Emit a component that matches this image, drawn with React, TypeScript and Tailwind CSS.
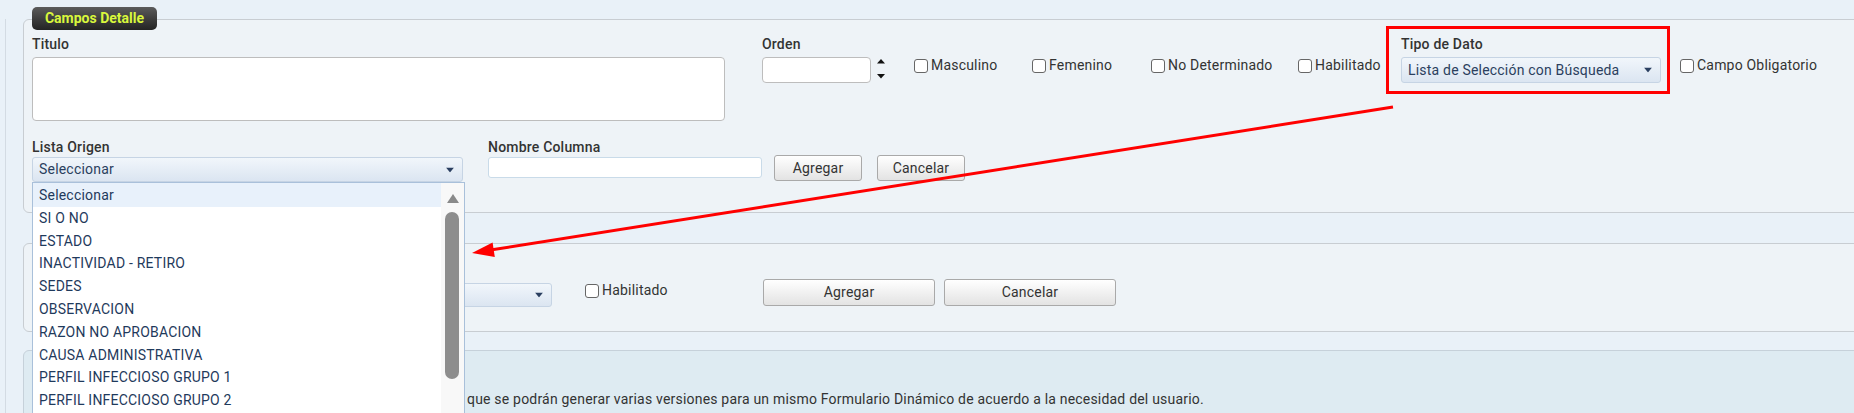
import React from 'react';

const LISTA_ORIGEN = [
  'SI O NO',
  'ESTADO',
  'INACTIVIDAD - RETIRO',
  'SEDES',
  'OBSERVACION',
  'RAZON NO APROBACION',
  'CAUSA ADMINISTRATIVA',
  'PERFIL INFECCIOSO GRUPO 1',
  'PERFIL INFECCIOSO GRUPO 2',
];

function Caret() {
  return (
    <svg width="8" height="5" viewBox="0 0 8 5" className="absolute right-[8px] top-1/2 -translate-y-1/2">
      <path d="M0 0 H8 L4 5 Z" fill="#2a3f60" />
    </svg>
  );
}

function Select({ value, className }: { value: string; className: string }) {
  return (
    <div className={`relative flex items-center rounded-[3px] border border-[#c6d4e4] bg-linear-to-b from-[#f1f6fb] to-[#dbe5f1] pl-[6px] text-[14px] text-[#2b3f5e] ${className}`}>
      <span className="truncate">{value}</span>
      <Caret />
    </div>
  );
}

function Check({ label, className }: { label: string; className: string }) {
  return (
    <label className={`flex h-[17px] items-center gap-[3px] whitespace-nowrap text-[14px] text-[#333] ${className}`}>
      <span className="h-[14px] w-[14px] shrink-0 rounded-[3px] border border-[#666] bg-white" />
      {label}
    </label>
  );
}

function Label({ children, className = 'mb-[4px]' }: { children: React.ReactNode; className?: string }) {
  return <div className={`text-[14px] font-medium leading-[17px] text-[#333] ${className}`}>{children}</div>;
}

function Button({ children, className }: { children: React.ReactNode; className: string }) {
  return (
    <button className={`rounded-[3px] border border-[#a9a9a9] bg-linear-to-b from-white to-[#e3e3e3] text-[14px] text-[#333] ${className}`}>
      {children}
    </button>
  );
}

export default function App() {
  return (
    <div className="relative h-[413px] w-full overflow-hidden bg-[#e9f1f8] pl-[5px] font-['Roboto','Liberation_Sans',sans-serif] tracking-[0.2px]">
      <div className="h-full border-l border-[#d3dbe3] pl-[17px]">
        {/* Campos Detalle */}
        <div className="relative -mr-[30px] mt-[19px] h-[194px] rounded-[6px] border border-[#c8cdd2] bg-[#eef3f7] pl-[8px] pt-[16px]">
          <div className="absolute -top-[13px] left-[8px] flex h-[23px] w-[125px] items-center justify-center rounded-[5px] bg-linear-to-b from-[#5b5b5b] to-[#242424] text-[14px] font-bold tracking-normal text-[#d9f73c]">
            Campos Detalle
          </div>

          <div className="flex items-start">
            <div className="w-[693px]">
              <Label>Titulo</Label>
              <div className="h-[64px] rounded-[4px] border border-[#bdbdbd] bg-white" />
            </div>
            <div className="ml-[37px]">
              <Label>Orden</Label>
              <div className="flex items-start">
                <div className="h-[26px] w-[109px] rounded-[4px] border border-[#bdbdbd] bg-white" />
                <svg width="9" height="20" viewBox="0 0 9 20" className="ml-[6px] mt-[2px]">
                  <path d="M0 4.5 H8 L4 0 Z" fill="#111" />
                  <path d="M0 15 H8 L4 19.5 Z" fill="#111" />
                </svg>
              </div>
            </div>
            <Check label="Masculino" className="ml-[28px] mt-[21px] w-[118px]" />
            <Check label="Femenino" className="mt-[21px] w-[119px]" />
            <Check label="No Determinado" className="mt-[21px] w-[147px]" />
            <Check label="Habilitado" className="mt-[21px] w-[88px]" />
            <div className="-mt-[10px] h-[68px] w-[284px] border-[3px] border-[#ff0000] pl-[12px] pt-[7px]">
              <Label>Tipo de Dato</Label>
              <Select value="Lista de Selección con Búsqueda" className="h-[26px] w-[260px]" />
            </div>
            <Check label="Campo Obligatorio" className="ml-[10px] mt-[21px]" />
          </div>

          <div className="mt-[18px] flex items-start">
            <div className="w-[431px]">
              <Label className="mb-[1px]">Lista Origen</Label>
              <Select value="Seleccionar" className="h-[25px]" />
            </div>
            <div className="ml-[25px] w-[274px]">
              <Label className="mb-[1px]">Nombre Columna</Label>
              <div className="h-[21px] rounded-[3px] border border-[#c9dbe9] bg-white" />
            </div>
            <Button className="ml-[12px] mt-[16px] h-[26px] w-[88px]">Agregar</Button>
            <Button className="ml-[15px] mt-[16px] h-[26px] w-[88px]">Cancelar</Button>
          </div>
        </div>

        {/* Segundo bloque, en parte tapado por la lista desplegada */}
        <div className="-mr-[30px] mt-[30px] h-[89px] rounded-[6px] border border-[#c8cdd2] bg-[#eef3f7] pl-[8px] pt-[39px]">
          <div className="flex items-start">
            <div className="h-[24px] w-[520px] rounded-[3px] border border-[#c6d4e4] bg-linear-to-b from-[#f1f6fb] to-[#dbe5f1] relative">
              <Caret />
            </div>
            <Check label="Habilitado" className="ml-[33px] mt-[-1px] w-[178px]" />
            <Button className="-mt-[4px] h-[27px] w-[172px]">Agregar</Button>
            <Button className="-mt-[4px] ml-[9px] h-[27px] w-[172px]">Cancelar</Button>
          </div>
        </div>

        {/* Nota */}
        <div className="-mr-[30px] mt-[18px] h-[120px] rounded-tl-[6px] border border-[#c6d1da] bg-[#deebf2] pl-[443px] pt-[40px] text-[14px] leading-[17px] text-[#333]">
          <div className="whitespace-nowrap">
            que se podrán generar varias versiones para un mismo Formulario Dinámico de acuerdo a la necesidad del usuario.
          </div>
        </div>
      </div>

      {/* Lista desplegada */}
      <div className="absolute left-[32px] top-[182px] z-10 flex h-[260px] w-[433px] border border-[#a9c0da] bg-white">
        <div className="flex-1">
          <div className="flex h-[24px] items-center bg-[#e8f1fb] pl-[6px] text-[14px] text-[#1f3a5c]">Seleccionar</div>
          {LISTA_ORIGEN.map(item => (
            <div key={item} className="flex h-[22.8px] items-center pl-[6px] text-[14px] text-[#1f3a5c]">
              {item}
            </div>
          ))}
        </div>
        <div className="relative w-[23px] bg-[#f8f8f8]">
          <svg width="12" height="9" viewBox="0 0 12 9" className="absolute left-[6px] top-[11px]">
            <path d="M0 9 H12 L6 0 Z" fill="#8a8a8a" />
          </svg>
          <div className="absolute left-[4px] top-[29px] h-[167px] w-[14px] rounded-full bg-[#8d8d8d]" />
        </div>
      </div>

      {/* Flecha */}
      <svg className="pointer-events-none absolute left-0 top-0 z-20" width="1854" height="413" viewBox="0 0 1854 413">
        <line x1="1393" y1="107" x2="492" y2="249.8" stroke="#ff0000" strokeWidth="3" />
        <path d="M472 253 L494.8 257 L492.6 242.4 Z" fill="#ff0000" />
      </svg>
    </div>
  );
}
